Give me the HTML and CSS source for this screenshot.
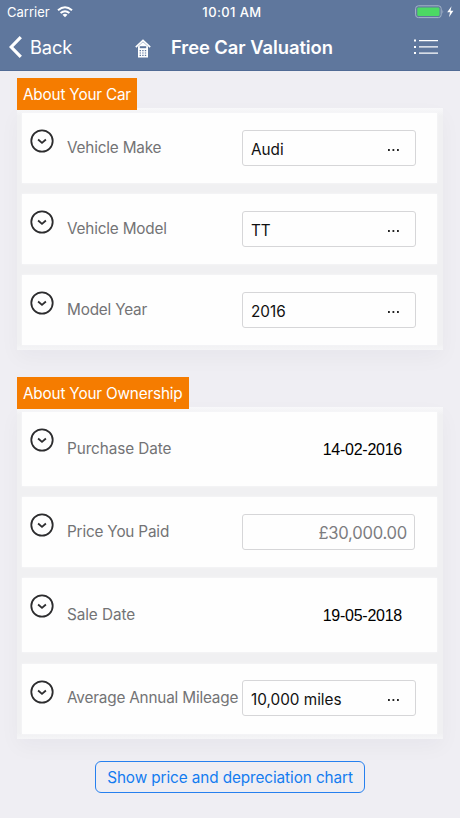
FILE: index.html
```html
<!DOCTYPE html>
<html lang="en">
<head>
<meta charset="utf-8">
<title>Free Car Valuation</title>
<link rel="stylesheet" href="styles.css">
</head>
<body>
<svg class="defs" width="0" height="0" aria-hidden="true">
  <symbol id="chevron" viewBox="0 0 24 24">
    <circle cx="12" cy="12" r="10.7" fill="none" stroke="currentColor" stroke-width="1.8"/>
    <path d="M8.1 10.5L12 13.9L15.9 10.5" fill="none" stroke="currentColor" stroke-width="1.8"/>
  </symbol>
</svg>
<header class="header">
  <div class="status">
    <div class="carrier"><span>Carrier</span>
      <svg width="16" height="12" viewBox="0 0 16 12"><g fill="none" stroke="#fff" stroke-width="2"><path d="M1 4.3Q8-1.7 15 4.3"/><path d="M3.6 7.1Q8 3.3 12.4 7.1"/></g><path d="M5.5 8.7Q8 6.9 10.5 8.7L8 11.3Z" fill="#fff"/></svg>
    </div>
    <span class="clock">10:01 AM</span>
    <svg class="battery" width="40" height="14" viewBox="0 0 40 14"><rect x=".6" y=".8" width="25.6" height="11.8" rx="2.8" fill="none" stroke="#a5b4c8"/><rect x="2.3" y="2.5" width="22.2" height="8.4" rx="1.2" fill="#4cd964"/><path d="M27.5 4.8Q29 6.7 27.5 8.7Z" fill="#a5b4c8"/><path d="M36.5 1.2L32.2 7.3H35L34 12.3L38.4 5.8H35.6Z" fill="#fff"/></svg>
  </div>
  <nav class="nav">
    <div class="back"><svg width="14" height="22" viewBox="0 0 14 22"><path d="M11.8 1.2L2.2 11L11.8 20.8" fill="none" stroke="#fff" stroke-width="3.2"/></svg><span>Back</span></div>
    <svg class="logo" width="16" height="19" viewBox="0 0 16 19"><path d="M.8 8.2L8 1.4L15.2 8.2" fill="none" stroke="#fff" stroke-width="1.6"/><path d="M3 7.4V18.5H13V7.4L8 3Z" fill="#fff"/><path d="M4.8 8.2H11.2" stroke="#5f779d" stroke-width="2"/><path d="M4.6 11.6H11.6M4.6 14H11.6M4.6 16.4H11.6" stroke="#5f779d" stroke-width="1.2" stroke-dasharray="1.4 1.2"/></svg>
    <h1 class="title">Free Car Valuation</h1>
    <svg class="list" width="24" height="16" viewBox="0 0 24 16" fill="#fff"><path d="M0 .6H2V2.6H0ZM0 6.9H2V8.9H0ZM0 13.1H2V15.1H0ZM5 1H24V2.2H5ZM5 7.3H24V8.5H5ZM5 13.5H24V14.7H5Z"/></svg>
  </nav>
</header>
<main class="content">
  <section class="group">
    <h2 class="tag tag-car">About Your Car</h2>
    <div class="panel">
      <div class="row"><svg class="toggle"><use href="#chevron"/></svg><label>Vehicle Make</label><div class="field select"><span>Audi</span><i class="dots"></i></div></div>
      <div class="row"><svg class="toggle"><use href="#chevron"/></svg><label>Vehicle Model</label><div class="field select"><span>TT</span><i class="dots"></i></div></div>
      <div class="row"><svg class="toggle"><use href="#chevron"/></svg><label>Model Year</label><div class="field select"><span>2016</span><i class="dots"></i></div></div>
    </div>
  </section>
  <section class="group">
    <h2 class="tag tag-own">About Your Ownership</h2>
    <div class="panel">
      <div class="row tall"><svg class="toggle"><use href="#chevron"/></svg><label>Purchase Date</label><div class="field date"><span>14-02-2016</span></div></div>
      <div class="row"><svg class="toggle"><use href="#chevron"/></svg><label>Price You Paid</label><div class="field price"><span>£30,000.00</span></div></div>
      <div class="row tall"><svg class="toggle"><use href="#chevron"/></svg><label>Sale Date</label><div class="field date"><span>19-05-2018</span></div></div>
      <div class="row last"><svg class="toggle"><use href="#chevron"/></svg><label>Average Annual Mileage</label><div class="field select"><span>10,000 miles</span><i class="dots"></i></div></div>
    </div>
  </section>
  <button class="action"><span>Show price and depreciation chart</span></button>
</main>
</body>
</html>
```

FILE: styles.css
```css
* { box-sizing: border-box; }
body { margin: 0; width: 460px; height: 818px; overflow: hidden; background: #efeef3; font: 15.3px/20px Inter, "Liberation Sans", sans-serif; letter-spacing: -.18px; }
.defs { display: block; }
.header { height: 71px; background: #5f779d; border-bottom: 1px solid #516b95; color: #fff; letter-spacing: 0; }
.status { height: 24px; display: grid; grid-template-columns: 1fr auto 1fr; align-items: center; padding: 0 5px 0 7px; font-size: 13px; line-height: 24px; }
.carrier { display: flex; align-items: center; gap: 7px; }
.clock { padding-left: 2px; font-weight: 500; letter-spacing: .4px; }
.battery { justify-self: end; }
.nav { height: 46px; display: flex; align-items: center; padding: 0 22px 0 9px; }
.back { display: flex; align-items: center; gap: 7px; width: 126px; font-size: 18.3px; letter-spacing: -.1px; }
.logo { position: relative; top: 1px; }
.title { margin: 0 0 0 20px; font-size: 18.4px; font-weight: 600; line-height: 24px; letter-spacing: -.06px; white-space: nowrap; }
.list { margin-left: auto; }
.content { padding: 7px 17px 0; }
.group { height: 272px; margin-bottom: 27px; }
.group + .group { height: 362px; margin-bottom: 22px; }
.tag { position: relative; z-index: 1; height: 32px; margin: 0 0 -2px; padding: 0 6px; background: #f57c00; color: #fff; font-size: 15.3px; font-weight: 400; line-height: 33px; white-space: nowrap; }
.tag-car { width: 120px; }
.tag-own { width: 172px; }
.panel { display: flex; flex-direction: column; gap: 11px; width: 426px; padding: 5px 6px 5px 5px; background: linear-gradient(#f8f8fa, #f0f0f2 8px, #f0f0f2 calc(100% - 6px), #f5f5f7); box-shadow: 0 8px 20px rgba(30, 30, 60, .035); }
.row { display: flex; height: 70px; padding-left: 8px; background: #fefefe; box-shadow: 0 0 2px #f8f8fa; }
.tall { height: 74px; }
.last { margin-top: 1px; }
.toggle { flex: none; width: 24px; height: 24px; margin: 16px 13px 0 0; color: #2c2c2e; }
.row label { width: 175px; padding-top: 25px; color: #737375; white-space: nowrap; }
.tall label { padding-top: 27px; letter-spacing: -.08px; }
.field { flex: none; width: 174px; height: 36px; margin-top: 17px; padding: 0 8px; border: 1px solid #d6d6d8; border-radius: 3px; display: flex; align-items: center; justify-content: space-between; color: #111; white-space: nowrap; }
.last .toggle { margin-top: 15.5px; }
.last label { padding-top: 24px; }
.last .field { margin-top: 16px; }
.select span { padding-top: 4px; letter-spacing: 0; }
.dots { width: 11px; height: 2px; margin: 4px 8px 0 0; background: radial-gradient(circle at 1px 1px, #222 1px, transparent 1.2px) 0 0 / 4.5px 2px; }
.field.date { border-color: transparent; justify-content: flex-end; margin-top: 20px; padding-right: 13px; font: 16px/20px "Liberation Sans", sans-serif; letter-spacing: -.25px; color: #000; }
.field.price { width: 173px; justify-content: flex-end; padding: 1px 7px 0 0; font-size: 16.6px; letter-spacing: -.25px; color: #7c7c80; }
.action { display: block; width: 270px; height: 32px; margin: 0 0 0 78px; padding: 1px 0 0; background: transparent; border: 1px solid #2680ef; border-radius: 6px; color: #147cf0; font: 15.3px/29px Inter, "Liberation Sans", sans-serif; letter-spacing: -.09px; white-space: nowrap; }
```
